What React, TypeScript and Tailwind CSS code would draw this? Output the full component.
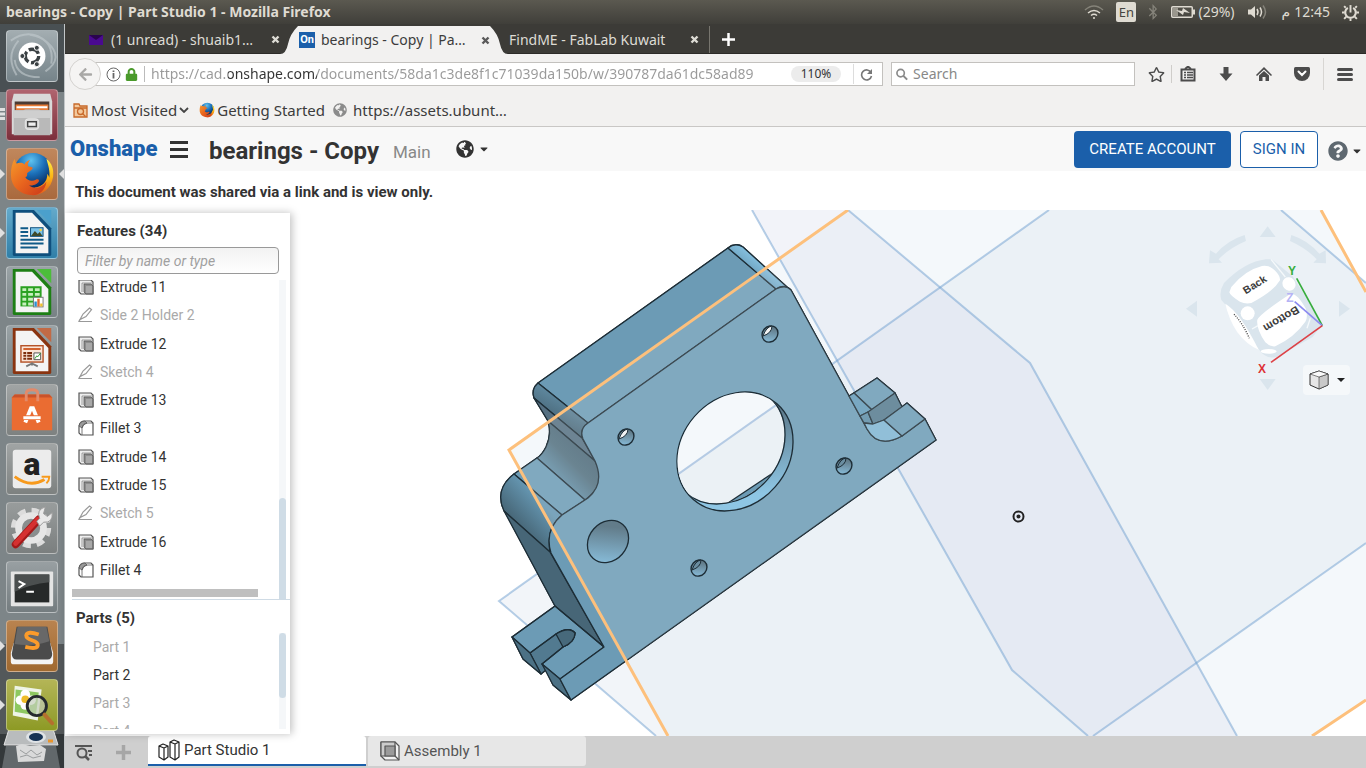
import { ReactNode, useState } from "react";
import {
	FaArrowLeft,
	FaBluetoothB,
	FaCaretDown,
	FaGlobeAmericas,
	FaLock,
	FaQuestionCircle,
	FaRegStar,
} from "react-icons/fa";

type Feature = { name: string; kind: "extrude" | "sketch" | "fillet" };

const features: Feature[] = [
	{ name: "Extrude 11", kind: "extrude" },
	{ name: "Side 2 Holder 2", kind: "sketch" },
	{ name: "Extrude 12", kind: "extrude" },
	{ name: "Sketch 4", kind: "sketch" },
	{ name: "Extrude 13", kind: "extrude" },
	{ name: "Fillet 3", kind: "fillet" },
	{ name: "Extrude 14", kind: "extrude" },
	{ name: "Extrude 15", kind: "extrude" },
	{ name: "Sketch 5", kind: "sketch" },
	{ name: "Extrude 16", kind: "extrude" },
	{ name: "Fillet 4", kind: "fillet" },
];

const parts = [
	{ name: "Part 1", hidden: true },
	{ name: "Part 2", hidden: false },
	{ name: "Part 3", hidden: true },
	{ name: "Part 4", hidden: true },
];

const FirefoxLogo = ({ className }: { className: string }) => (
	<svg className={className} viewBox="0 0 48 48">
		<defs>
			<radialGradient id="ffGlobe" cx=".45" cy=".2" r=".7">
				<stop offset="0" stopColor="#5fc3f0" />
				<stop offset=".5" stopColor="#1b6fb8" />
				<stop offset="1" stopColor="#082a5e" />
			</radialGradient>
			<linearGradient id="ffTail" x1="0" y1="0" x2="0" y2="1">
				<stop offset="0" stopColor="#fff04a" />
				<stop offset=".5" stopColor="#fdb515" />
				<stop offset="1" stopColor="#e4561c" />
			</linearGradient>
			<linearGradient id="ffFox" x1="0" y1="0" x2="1" y2="1">
				<stop offset="0" stopColor="#f59a2b" />
				<stop offset=".5" stopColor="#e8641e" />
				<stop offset="1" stopColor="#c9381a" />
			</linearGradient>
		</defs>
		<circle cx="25" cy="22" r="20" fill="url(#ffGlobe)" />
		<path
			d="M39 8c6 5 8 11 7 19-2 12-11 19-22 19l3-8c8-1 13-6 13-14 1 1 2 3 2 4 1-7-1-13-3-20z"
			fill="url(#ffTail)"
		/>
		<path
			d="M6 8c0 2 1 4 2 5 3-1 6-1 8 1 1-2 3-4 6-5-2 3-3 5-2 7l4 1c1 0 1 2-1 3l-4 3c0 3 0 4-2 4 2 4 7 5 11 3 2-1 4 0 3 2-3 4-8 4-10 4 6 4 13 3 18-4-1 9-8 15-16 14C11 45 2 37 2 25c0-7 1-12 4-17z"
			fill="url(#ffFox)"
		/>
	</svg>
);

const OfficeDoc = ({
	edge,
	fold,
	children,
}: {
	edge: string;
	fold: string;
	children: ReactNode;
}) => (
	<svg viewBox="0 0 52 52" className="size-full">
		<path d="M6 2h22l18 19v27q0 2-2 2H8q-2 0-2-2z" fill={edge} />
		<path d="M31 2h15v15z" fill={fold} />
		<path d="M9 5h17l17 18v24H9z" fill="#f4f4f4" />
		{children}
	</svg>
);

const launcher: { name: string; tile: string; mark?: string; icon: ReactNode }[] = [
	{
		name: "Dash",
		tile: "from-[#a3adb1] to-[#76848a]",
		icon: (
			<svg viewBox="0 0 52 52" className="size-full">
				<path d="M4 10Q24-4 42 12T40 42M10 46Q-2 26 12 10M24 4q26 4 22 30M8 30q2 18 26 18" stroke="#c3cbce" strokeWidth="2" fill="none" opacity=".6" />
				<circle cx="26" cy="26" r="14" fill="#fff" />
				<circle cx="26" cy="26" r="7" stroke="#3b4144" strokeWidth="3.5" fill="none" strokeDasharray="12 2.66" />
				<g fill="#3b4144" stroke="#fff" strokeWidth="1">
					<circle cx="16" cy="26" r="2.6" />
					<circle cx="31" cy="17.5" r="2.6" />
					<circle cx="31" cy="34.5" r="2.6" />
				</g>
			</svg>
		),
	},
	{
		name: "Files",
		tile: "from-[#b0646f] to-[#7c2f3c]",
		mark: "bars",
		icon: (
			<svg viewBox="0 0 52 52" className="size-full">
				<path d="M7 4h38l2 8v34H5V12z" fill="#d9d9d9" />
				<path d="M8 12h36v10H8z" fill="#4b3b33" />
				<path d="M9 15h34v6H9z" fill="#e87b35" />
				<path d="M10 17h32v2H10z" fill="#fff" />
				<path d="M7 21h10l2-1h14l2 1h10v26H7z" fill="#b9b9b9" />
				<path d="M7 21h38v8H7z" fill="#cfcfcf" />
				<rect x="19" y="30" width="14" height="11" rx="3" fill="#d8d8d8" stroke="#e8e8e8" />
				<rect x="21.5" y="33" width="9" height="5" fill="#eee" stroke="#444" strokeWidth="1.5" />
			</svg>
		),
	},
	{
		name: "Firefox",
		tile: "from-[#c0875c] to-[#a9693d]",
		mark: "both",
		icon: <FirefoxLogo className="size-full p-[2px]" />,
	},
	{
		name: "Writer",
		tile: "from-[#64aacb] to-[#2f7fa8]",
		mark: "left",
		icon: (
			<OfficeDoc edge="#0f4f7d" fold="#4ba0cc">
				<path d="M14 21h8M14 25h8M14 29h8M14 33h24M14 37h24M14 41h18" stroke="#0f5a88" strokeWidth="2" />
				<rect x="24.5" y="20.5" width="13" height="9" fill="#7cc3e8" stroke="#0f4f7d" />
				<path d="M25 29l4-5 3 3 2-2 3 4z" fill="#3f4a2a" />
				<circle cx="35" cy="23" r="1.3" fill="#f7d13d" />
			</OfficeDoc>
		),
	},
	{
		name: "Calc",
		tile: "from-[#9aa3a6] to-[#778184]",
		icon: (
			<OfficeDoc edge="#1d7f14" fold="#4cbd3a">
				<rect x="14" y="20" width="22" height="21" fill="#2aa121" />
				<path d="M16 22h4v3h-4zM22 22h5v3h-5zM29 22h5v3h-5zM16 27h4v3h-4zM22 27h5v3h-5zM29 27h5v3h-5zM16 32h4v3h-4zM22 32h5v3h-5zM16 37h4v3h-4zM22 37h5v3h-5z" fill="#c7efbd" />
				<rect x="27.5" y="31.5" width="10" height="10" fill="#fff" stroke="#777" />
				<path d="M28.5 36H31v5h-2.5z" fill="#2d8fd0" />
				<path d="M31.5 33H34v8h-2.5z" fill="#e4682c" />
				<path d="M34.5 38H37v3h-2.5z" fill="#f1c02c" />
			</OfficeDoc>
		),
	},
	{
		name: "Impress",
		tile: "from-[#9aa3a6] to-[#778184]",
		icon: (
			<OfficeDoc edge="#8a3410" fold="#c26a45">
				<rect x="14.5" y="20.5" width="23" height="17" fill="#fbe6d8" stroke="#b5542a" strokeWidth="1.5" />
				<path d="M17 24h18" stroke="#d1622f" strokeWidth="2" />
				<path d="M17 28h3M17 31h3M17 34h3M21 28h5M21 31h5M21 34h5" stroke="#7c2d0c" strokeWidth="2" />
				<path d="M28 28h7v7h-7z" fill="#fff" stroke="#555" />
				<path d="M29 34l2-3 1 1 3-4" stroke="#2e9b2e" fill="none" />
				<path d="M26 38v3M20 42l6-3 6 3" stroke="#777" strokeWidth="2" fill="none" />
			</OfficeDoc>
		),
	},
	{
		name: "Software",
		tile: "from-[#a0a4a4] to-[#7d8180]",
		icon: (
			<svg viewBox="0 0 52 52" className="size-full">
				<path d="M5 13l3-3h36l3 3v34H5z" fill="#ea6c32" />
				<path d="M5 13l3-3h36l3 3z" fill="#c9522a" />
				<path d="M20 17V9q0-4 6-4t6 4v8" stroke="#e28a6a" strokeWidth="3" fill="none" />
				<path d="M19 39l6-15h2l6 15" stroke="#fff" strokeWidth="4" fill="none" />
				<path d="M17 34h18" stroke="#ea6c32" strokeWidth="5" />
				<path d="M17 34h18" stroke="#fff" strokeWidth="3" />
			</svg>
		),
	},
	{
		name: "Amazon",
		tile: "from-[#a0a4a4] to-[#7d8180]",
		icon: (
			<svg viewBox="0 0 52 52" className="size-full">
				<rect x="6" y="6" width="40" height="40" rx="3" fill="#ececec" />
				<text x="26" y="32" textAnchor="middle" fontFamily="Roboto, sans-serif" fontWeight="900" fontSize="33" fill="#222">a</text>
				<path d="M8 34q16 12 31 3" stroke="#f79a1d" strokeWidth="3" fill="none" />
				<path d="M36 34h8q0 4-3 7" stroke="#f79a1d" strokeWidth="2" fill="none" />
			</svg>
		),
	},
	{
		name: "Settings",
		tile: "from-[#989c9c] to-[#7b7f7f]",
		icon: (
			<svg viewBox="0 0 52 52" className="size-full">
				<circle cx="25" cy="26" r="18" stroke="#dcdcdc" strokeWidth="6" fill="none" strokeDasharray="8 6.14" />
				<circle cx="25" cy="26" r="13" stroke="#e6e6e6" strokeWidth="7" fill="#8a8e8e" />
				<path d="M9 43l24-26" stroke="#a31a1a" strokeWidth="8" strokeLinecap="round" />
				<path d="M9 42l23-25" stroke="#d53131" strokeWidth="5" strokeLinecap="round" />
				<path d="M31 19l3-3q-4-9 6-12l-2 7 4 3 5-4q1 11-9 10l-4 4z" fill="#e9e9e9" stroke="#999" />
			</svg>
		),
	},
	{
		name: "Terminal",
		tile: "from-[#989fa2] to-[#747c7f]",
		icon: (
			<svg viewBox="0 0 52 52" className="size-full">
				<rect x="4" y="10" width="44" height="36" rx="1" fill="#e4e4e4" />
				<rect x="8" y="13" width="36" height="29" fill="#262929" />
				<path d="M8 13h36v8q-20 2-36 10z" fill="#4b4f4f" />
				<path d="M12 20l6 3-6 4M20 31h8" stroke="#fff" strokeWidth="2" fill="none" />
			</svg>
		),
	},
	{
		name: "Sublime Text",
		tile: "from-[#b9834f] to-[#a0692f]",
		mark: "left",
		icon: (
			<svg viewBox="0 0 52 52" className="size-full">
				<path d="M4 33l3-10h38l3 10v9q0 3-3 3H7q-3 0-3-3z" fill="#f4f4f4" />
				<path d="M10 6h32l5 28q0 6-5 6H10q-5 0-5-6z" fill="#4b4b4b" />
				<path d="M11 6h30l3 15q-18 6-36 3z" fill="#686868" />
				<path d="M33 14q-12-4-13 1 0 3 6 5t6 5q0 5-13 2" stroke="#fb9b2b" strokeWidth="4" fill="none" />
			</svg>
		),
	},
	{
		name: "Image Viewer",
		tile: "from-[#b4b556] to-[#8d9a24]",
		mark: "left",
		icon: (
			<svg viewBox="0 0 52 52" className="size-full">
				<path d="M8 6l28 4-4 32-26-5z" fill="#eef4e6" />
				<path d="M9 10l24 3-3 24-22-4z" fill="#8dc860" />
				<g fill="#fff">
					<circle cx="19" cy="15" r="5" />
					<circle cx="14" cy="21" r="5" />
					<circle cx="25" cy="21" r="5" />
					<circle cx="19" cy="26" r="5" />
				</g>
				<circle cx="19" cy="20" r="4" fill="#eebc28" />
				<circle cx="31" cy="27" r="10" fill="#c3cdbb" fillOpacity=".7" stroke="#262a2e" strokeWidth="3" />
				<path d="M39 36l8 9" stroke="#b4702e" strokeWidth="4" strokeLinecap="round" />
			</svg>
		),
	},
];

const Launcher = () => (
	<nav
		aria-label="Launcher"
		className="w-[65px] shrink-0 overflow-hidden border-r border-[#c2c6c8] bg-[linear-gradient(to_bottom,#495053_0_68px,#7d8588_68px_620px,#53585a_620px_710px,#33383a_710px)]"
	>
		<ul className="flex flex-col gap-[7px] px-[6px] pt-[6px]">
			{launcher.map((app) => (
				<li key={app.name} className="relative h-[52px]">
					<button
						aria-label={app.name}
						className={`block h-full w-[52px] overflow-hidden rounded-[4px] border border-white/35 bg-gradient-to-b ${app.tile}`}
					>
						{app.icon}
					</button>
					{(app.mark === "left" || app.mark === "both") && (
						<svg className="absolute -left-[6px] top-[21px] h-[10px] w-[5px]" viewBox="0 0 5 10">
							<path d="M0 0l5 5-5 5z" fill="#e0e0e0" />
						</svg>
					)}
					{app.mark === "bars" && (
						<svg className="absolute -left-[6px] top-[19px] h-3 w-[5px]" viewBox="0 0 5 12">
							<path d="M0 1.5h5M0 6h5M0 10.5h5" stroke="#e0e0e0" strokeWidth="3" />
						</svg>
					)}
					{app.mark === "both" && (
						<svg className="absolute -right-[6px] top-[21px] h-[10px] w-[5px]" viewBox="0 0 5 10">
							<path d="M5 0L0 5l5 5z" fill="#e0e0e0" />
						</svg>
					)}
				</li>
			))}
		</ul>
		<svg viewBox="0 0 60 40" className="-mt-[3px] block h-10 w-[60px]">
			<path d="M9 1h44l5 16H4z" fill="#b9bcbd" stroke="#e3e3e3" />
			<ellipse cx="36" cy="9" rx="10" ry="6" fill="#dfe3e6" />
			<ellipse cx="36" cy="9" rx="7" ry="4" fill="#173354" />
			<path d="M48 13h5" stroke="#e9952c" strokeWidth="3" />
			<path d="M6 18h50l4 22H2z" fill="#62686b" />
			<path d="M16 18l6-2 8 2 10-1 6 4-2 12-26 1z" fill="#d9dada" />
			<path d="M20 22l6 4 5-4 6 5 5-3M20 29l7-2 6 3 8-2" stroke="#9a9d9e" fill="none" />
		</svg>
	</nav>
);

const SystemBar = () => (
	<header className="flex h-6 shrink-0 items-center justify-between bg-gradient-to-b from-[#5b5950] to-[#403f3a] pl-[6px] pr-[7px] text-[#dfdbd2]">
		<h1 className="text-sm font-bold">
			bearings - Copy | Part Studio 1 - Mozilla Firefox
		</h1>
		<div className="flex items-center text-[15px]">
			<svg className="h-[14px] w-5" viewBox="0 0 20 14" fill="none" strokeWidth="1.5">
				<path d="M1 5q9-8 18 0" stroke="#858379" />
				<path d="M4 8q6-5 12 0M7 10.5q3-2.5 6 0" stroke="#dfdbd2" />
				<circle cx="10" cy="13" r="1" fill="#dfdbd2" />
			</svg>
			<button className="ml-3 h-5 w-5 rounded-[2px] bg-[#dfdbd2] text-[13px] leading-5 text-[#45443f]">En</button>
			<FaBluetoothB className="ml-[9px] size-4 text-[#85837a]" />
			<svg className="ml-[10px] h-3 w-6" viewBox="0 0 24 12">
				<rect x=".75" y=".75" width="20.5" height="10.5" rx="1" fill="none" stroke="#dfdbd2" strokeWidth="1.5" />
				<path d="M22 3.5h2v5h-2z" fill="#dfdbd2" />
				<path d="M2 2h5v8H2z" fill="#9a978d" />
				<path d="M5 4l6 1 1-3 7 5-6-1-1 3z" fill="#dfdbd2" />
			</svg>
			<span className="ml-[3px] text-sm">(29%)</span>
			<svg className="ml-[13px] h-4 w-5" viewBox="0 0 20 16" fill="none" strokeWidth="1.5">
				<path d="M0 5.5h3L7 2v12l-4-3.5H0z" fill="#dfdbd2" />
				<path d="M9 5q2 3 0 6M12 3.5q3 4.5 0 9" stroke="#dfdbd2" />
				<path d="M15 1.5q5 6.5 0 13" stroke="#85837a" />
			</svg>
			<span dir="rtl" className="ml-[14px] font-['DejaVu_Sans',sans-serif] text-sm">م</span>
			<time className="ml-1 text-sm">12:45</time>
			<svg className="ml-3 size-[17px]" viewBox="0 0 16 16" fill="none" stroke="#dfdbd2">
				<path d="M5.5 3.6a5 5 0 1 0 5 0" strokeWidth="2" />
				<path d="M8 1v7" strokeWidth="1.8" />
				<path d="M3.5 3.5L2 2M12.500 3.5L14 2M2.500 8H0M13.500 8H16M4 12l-2 2M12 12l2 2M8 13.500V16" strokeWidth="1.8" />
			</svg>
		</div>
	</header>
);

const CloseMark = ({ className }: { className: string }) => (
	<button aria-label="Close tab" className={`size-[9px] ${className}`}>
		<svg viewBox="0 0 9 9" className="size-full">
			<path d="M1.5 1.5l6 6M7.5 1.5l-6 6" stroke="currentColor" strokeWidth="2.4" />
		</svg>
	</button>
);

const TabStrip = () => (
	<div className="flex h-[30px] items-end border-b border-[#2c2b28] bg-[#3c3b37] text-sm text-[#dedcd5]">
		<div className="flex h-[27px] w-[215px] items-center pl-6">
			<svg className="mr-2 h-[10px] w-[14px]" viewBox="0 0 14 10">
				<path d="M0 0h14v10H0z" fill="#4a0a90" />
				<path d="M0 0h14L7 5z" fill="#2a044f" />
			</svg>
			<span className="w-[160px] truncate">(1 unread) - shuaib1…</span>
			<CloseMark className="-mr-1 shrink-0" />
		</div>
		<svg className="-mb-px h-7 w-[18px]" viewBox="0 0 18 28">
			<path d="M0 28Q6 28 8 18T18 0v28z" fill="#f2f1f0" />
		</svg>
		<div className="-mb-px flex h-7 w-48 items-center bg-[#f2f1f0] text-[#3c3c3c]">
			<span className="ml-px mr-[6px] h-4 w-4 shrink-0 overflow-hidden bg-[#1b5faa] text-center font-[Roboto,sans-serif] text-[11px] font-bold leading-4 text-white">
				On
			</span>
			<span className="w-[160px] truncate whitespace-pre">bearings - Copy | Pa…</span>
			<CloseMark className="shrink-0 text-[#5a5a5a]" />
		</div>
		<svg className="-mb-px h-7 w-[18px]" viewBox="0 0 18 28">
			<path d="M18 28Q12 28 10 18T0 0v28z" fill="#f2f1f0" />
		</svg>
		<div className="flex h-[27px] w-[202px] items-center border-r border-[#77756e] pl-px">
			<span className="w-[181px] truncate">FindME - FabLab Kuwait</span>
			<CloseMark className="shrink-0" />
		</div>
		<button aria-label="New tab" className="ml-3 flex h-[27px] items-center">
			<svg viewBox="0 0 13 13" className="size-[13px]">
				<path d="M6.5 0v13M0 6.5h13" stroke="#fff" strokeWidth="2.5" />
			</svg>
		</button>
	</div>
);

const NavBar = () => (
	<div className="flex h-10 items-center bg-[#f2f1f0] pl-1 pr-[13px]">
		<button
			aria-label="Back"
			className="relative z-10 flex size-8 shrink-0 items-center justify-center rounded-full border border-[#d4d2cf] bg-[#f5f4f3]"
		>
			<FaArrowLeft className="size-[15px] text-[#a9a8a6]" />
		</button>
		<div className="-ml-[6px] flex h-6 flex-1 items-center border border-[#c3c1be] bg-white pl-[10px]">
			<svg className="size-[15px] shrink-0" viewBox="0 0 15 15">
				<circle cx="7.5" cy="7.5" r="6.5" fill="none" stroke="#666" />
				<path d="M7.5 6v5.5M7.5 3.5V5" stroke="#666" strokeWidth="1.8" />
			</svg>
			<FaLock className="ml-1 size-[13px] shrink-0 text-[#4a9a2b]" />
			<div className="ml-[6px] h-4 w-px shrink-0 bg-[#bbb]" />
			<input
				aria-label="Address"
				readOnly
				value="https://cad.onshape.com/documents/58da1c3de8f1c71039da150b/w/390787da61dc58ad89"
				className="ml-[6px] min-w-0 flex-1 bg-[linear-gradient(90deg,#999_0_77px,#333_77px_166px,#999_166px)] bg-clip-text text-sm text-transparent outline-none"
			/>
			<button className="ml-[22px] h-4 w-[50px] shrink-0 rounded-full bg-[#ececec] text-xs leading-4 text-[#333]">110%</button>
			<div className="ml-3 h-5 w-px bg-[#ddd]" />
			<button aria-label="Reload" className="ml-[6px] mr-[9px]">
				<svg className="size-[13px]" viewBox="0 0 13 13" fill="none">
					<path d="M11 4.5A5 5 0 1 0 11.5 8" stroke="#777" strokeWidth="1.6" />
					<path d="M12 1v5H7z" fill="#777" />
				</svg>
			</button>
		</div>
		<div className="ml-2 flex h-6 w-[244px] items-center gap-[5px] border border-[#c3c1be] bg-white pl-1">
			<svg className="size-[13px]" viewBox="0 0 13 13" fill="none" stroke="#8a8a8a" strokeWidth="1.8">
				<circle cx="5" cy="5" r="4" />
				<path d="M8 8l4 4" strokeWidth="2.2" />
			</svg>
			<input
				aria-label="Search"
				placeholder="Search"
				className="w-full text-sm outline-none placeholder:text-[#888]"
			/>
		</div>
		<div className="flex items-center text-[#4c4c4c]">
			<button aria-label="Bookmark" className="ml-[13px]">
				<FaRegStar className="size-[17px]" />
			</button>
			<div className="ml-[6px] h-[18px] w-px bg-[#cfcdca]" />
			<button aria-label="Bookmarks list" className="ml-2">
				<svg className="size-4" viewBox="0 0 16 16" fill="none" stroke="currentColor">
					<path d="M1.5 3.5h13v11h-13z" strokeWidth="2" />
					<path d="M5 3l3-2.500L11 3" strokeWidth="2" />
					<path d="M4 6.5h2M4 9h2M4 11.5h2M7 6.5h6M7 9h6M7 11.5h6" strokeWidth="1.3" />
				</svg>
			</button>
			<button aria-label="Downloads" className="ml-[22px]">
				<svg className="size-4" viewBox="0 0 16 16" fill="currentColor">
					<path d="M5.5 1h5v6.500h4L8 15 1.500 7.500h4z" />
				</svg>
			</button>
			<button aria-label="Home" className="ml-[22px]">
				<svg className="size-4" viewBox="0 0 16 16" fill="currentColor">
					<path d="M8 1L0 9l1 1 7-6.500L15 10l1-1z" />
					<path d="M8 5L3 9.500V15h3.500v-4h3v4H13V9.500z" />
				</svg>
			</button>
			<button aria-label="Pocket" className="ml-[22px]">
				<svg className="size-4" viewBox="0 0 16 16">
					<path d="M1.500 1h13Q16 1 16 2.500V7a8 8 0 0 1-16 0V2.500Q0 1 1.500 1z" fill="currentColor" />
					<path d="M4.500 5.500L8 9l3.500-3.500" stroke="#fff" strokeWidth="2" strokeLinecap="round" fill="none" />
				</svg>
			</button>
			<div className="ml-[13px] h-8 w-px bg-[#d8d6d3]" />
			<button aria-label="Menu" className="ml-[13px] flex w-4 flex-col gap-[2px]">
				<i className="h-[3px] rounded-full bg-[#4c4c4c]" />
				<i className="h-[3px] rounded-full bg-[#4c4c4c]" />
				<i className="h-[3px] rounded-full bg-[#4c4c4c]" />
			</button>
		</div>
	</div>
);

const BookmarksBar = () => (
	<div className="flex h-[33px] items-center border-b border-[#c9c7c5] bg-[#f2f1f0] pl-2 text-[15px] text-[#3c3c3c]">
		<a href="#most-visited" className="flex items-center">
			<svg className="mr-[3px] size-[15px]" viewBox="0 0 15 15" fill="none" stroke="#c8692a" strokeWidth="1.3">
				<path d="M1 14V1h5l1 2h7v11z" fill="#f3c99d" />
				<circle cx="7.5" cy="8.5" r="3" />
				<path d="M9.5 10.5l3 3M1 5h13" />
			</svg>
			Most Visited
			<svg className="ml-[2px] h-[6px] w-[10px]" viewBox="0 0 10 6">
				<path d="M1 1l4 4 4-4" stroke="#444" strokeWidth="1.8" fill="none" />
			</svg>
		</a>
		<a href="#getting-started" className="ml-[10px] flex items-center">
			<FirefoxLogo className="mr-[2px] size-4" />
			Getting Started
		</a>
		<a href="#assets" className="ml-2 flex items-center">
			<FaGlobeAmericas className="mr-[6px] size-[14px] text-[#8b8b8b]" />
			https://assets.ubunt…
		</a>
	</div>
);

const DocumentHeader = () => (
	<div className="flex h-[44px] items-center bg-[#f8f8f8] pl-[5px] pr-[3px]">
		<a href="#home" className="w-[87px] font-[Roboto,sans-serif] text-[22px] font-black leading-8 text-[#1b5faa]">
			Onshape
		</a>
		<button aria-label="Document menu" className="ml-[13px] flex w-[18px] flex-col gap-1">
			<i className="h-[3px] bg-[#333]" />
			<i className="h-[3px] bg-[#333]" />
			<i className="h-[3px] bg-[#333]" />
		</button>
		<h2 className="ml-[21px] pt-[3px] text-2xl font-bold text-[#333]">bearings - Copy</h2>
		<span className="ml-[14px] pt-2 text-[17px] text-[#888]">Main</span>
		<button aria-label="Public document" className="ml-[25px] flex items-center gap-1 text-[#333]">
			<FaGlobeAmericas className="size-[18px]" />
			<FaCaretDown className="size-3" />
		</button>
		<div className="ml-auto flex items-center">
			<button className="h-[37px] w-[157px] rounded bg-[#1b5faa] text-[15px] text-white">CREATE ACCOUNT</button>
			<button className="ml-[9px] h-[37px] w-[78px] rounded border border-[#1b5faa] bg-white text-[15px] text-[#1b5faa]">
				SIGN IN
			</button>
			<button aria-label="Help" className="ml-[10px] flex items-center gap-[3px] pt-1 text-[#333]">
				<FaQuestionCircle className="size-5 text-[#5e6870]" />
				<FaCaretDown className="size-3" />
			</button>
		</div>
	</div>
);

const FeatureIcon = ({ kind }: { kind: Feature["kind"] }) => {
	if (kind === "sketch") {
		return (
			<svg className="size-4" viewBox="0 0 16 16" fill="none" stroke="#999">
				<path d="M2 12.5L5 7l6.5-6 2 1.500L8 9.500z" strokeWidth="1.2" />
				<path d="M2 12.5L1 14.500h13" strokeWidth="1.2" />
			</svg>
		);
	}
	if (kind === "fillet") {
		return (
			<svg className="size-4" viewBox="0 0 16 16" fill="#fff" stroke="#555">
				<path d="M1 13V6Q2 1 7 1h6l2 2v12H3z" strokeWidth="1.2" />
				<path d="M1 6q1-5 6-5l2 2Q5 4 4 8z" fill="#999" strokeWidth=".8" />
				<path d="M4 15V8q1-5 6-5h5" fill="none" strokeWidth=".8" />
			</svg>
		);
	}
	return (
		<svg className="size-4" viewBox="0 0 16 16" fill="#eee" stroke="#555">
			<path d="M1 1h12l2 2v12H3l-2-2z" strokeWidth="1.2" />
			<path d="M4 13V4h11" fill="none" strokeWidth=".8" stroke="#888" />
			<path d="M6 5h7l2 2v8H8l-2-2z" fill="#8c8c8c" strokeWidth=".8" />
			<path d="M8 7h6v7H8z" fill="#a8a8a8" stroke="none" />
		</svg>
	);
};

const FeaturePanel = () => {
	const [filter, setFilter] = useState("");
	const shown = features.filter((f) =>
		f.name.toLowerCase().includes(filter.toLowerCase())
	);

	return (
		<aside className="relative z-10 mb-[2px] mt-[3px] flex w-[225px] shrink-0 flex-col bg-white text-sm text-[#333] shadow-[2px_0_8px_rgba(0,0,0,0.25)]">
			<section className="ml-[7px] flex min-h-0 flex-1 flex-col border-b border-[#cfdbe5]">
				<div className="pl-[5px] pr-[11px]">
					<label htmlFor="filter" className="block h-[34px] pt-2 text-[15px] font-bold leading-5">
						Features (34)
					</label>
					<input
						id="filter"
						value={filter}
						onChange={(e) => setFilter(e.target.value)}
						placeholder="Filter by name or type"
						className="block h-[27px] w-full rounded border border-[#999] bg-gradient-to-b from-[#f2f2f2] to-white px-[7px] text-sm italic outline-none placeholder:text-[#a0a0a0]"
					/>
				</div>
				<div className="mt-[6px] flex min-h-0 flex-1">
					<div className="flex min-w-0 flex-1 flex-col overflow-hidden">
						<ul className="-mt-[7px] flex min-h-0 flex-1 flex-col justify-between">
							{shown.map((f) => (
								<li
									key={f.name}
									className={`flex h-7 items-center gap-[6px] pl-[6px] ${f.kind === "sketch" ? "text-[#aaa]" : "text-[#333]"}`}
								>
									<FeatureIcon kind={f.kind} />
									{f.name}
								</li>
							))}
						</ul>
						<div className="mb-[2px] mr-[21px] mt-[5px] h-2 shrink-0 bg-[#bfbfbf]" />
					</div>
					<div className="mr-1 flex w-[7px] flex-col justify-end bg-[#f5f7f9]">
						<div className="h-[101px] rounded-t-sm bg-[#cfdce6]" />
					</div>
				</div>
			</section>
			<section className="ml-[7px] flex h-[134px] flex-col pb-[5px]">
				<h3 className="h-[33px] pl-1 pt-2 text-[15px] font-bold leading-5">Parts (5)</h3>
				<div className="flex min-h-0 flex-1 overflow-hidden">
					<ul className="flex-1">
						{parts.map((p) => (
							<li
								key={p.name}
								className={`h-7 pl-[21px] leading-7 ${p.hidden ? "text-[#aaa]" : "text-[#333]"}`}
							>
								{p.name}
							</li>
						))}
					</ul>
					<div className="mr-1 w-[7px] bg-[#f5f7f9]">
						<div className="h-[65px] rounded-sm bg-[#cfdce6]" />
					</div>
				</div>
			</section>
		</aside>
	);
};

const bolts = [
	{ x: 770, y: 334, through: true },
	{ x: 626, y: 437, through: true },
	{ x: 844, y: 466, through: false },
	{ x: 699, y: 568, through: false },
];

const outline =
	"M735 245Q731 245 728 248L538 383Q531 389 534 398L548 421Q552 434 546 447Q542 455 537 458L514 474Q497 487 502 506L555 606L512 637L523 659L541 674L546 670L553 685L571 700L936 440L925 419L907 403L902 407L895 393L877 378L849 396L791 290L787 287L743 247Q739 244 735 245Z";

const PartModel = () => (
	<g stroke="#1d2d36" strokeWidth="1.3" strokeLinejoin="round">
		<path d={outline} fill="#6c9bb5" />
		{/* top face and its rounded ends */}
		<path d="M728 248L538 383L588 423L776 289Z" fill="#6c9bb5" />
		<path d="M728 248Q735 242 743 247L787 287Q781 285 776 289Z" fill="url(#filletLight)" />
		<path d="M538 383Q531 389 534 398L582 438Q580 428 588 423Z" fill="url(#filletDark)" />
		<path d="M534 398L548 421L595 461L582 438Z" fill="#567082" />
		<path d="M548 421Q552 434 546 447Q542 455 537 458L585 500Q602 488 599 472Q598 466 595 461Z" fill="url(#bay)" />
		<path d="M537 458L514 474L562 515L585 500Z" fill="#6c9bb5" />
		<path d="M514 474Q494 489 504 511L550 552Q546 528 562 515Z" fill="url(#shoulder)" />
		<path d="M504 511L550 552L604 647L555 606Z" fill="#476677" />
		{/* left foot */}
		<path d="M530 653L541 674L546 670L542 664L563 647Q575 642 575 633Q570 626 556 634Z" fill="#527a90" />
		<path d="M555 606L512 637L530 653L556 634Q569 626 575 633Q575 642 563 647L542 664L560 679L604 647Z" fill="none" />
		<path d="M512 637L523 659L541 674L530 653Z" fill="#4c7185" />
		<path d="M542 664L553 685L571 700L560 679Z" fill="#4c7185" />
		<path d="M556 634Q569 626 575 633Q575 642 563 647Z" fill="#47697b" />
		{/* front face */}
		<path
			d="M588 423Q579 429 583 439L595 461Q605 484 588 498L562 515Q544 530 551 553L604 647L560 679L571 700L936 440L925 419L902 436Q878 449 867 429L791 290Q786 284 776 289Z"
			fill="#6c9bb5"
		/>
		{/* right foot */}
		<path d="M854 393L877 378L895 393L872 410Z" fill="#6c9bb5" />
		<path d="M849 396L854 393L872 410L860 416Z" fill="#639ab8" />
		<path d="M860 416L868 412L873 424L864 423Z" fill="#5d8ca6" />
		<path d="M868 412L895 393L902 407L884 420L873 424Z" fill="#567b8f" />
		<path d="M864 423L873 424L884 420L902 436Q878 449 867 429Z" fill="#7fb5d2" />
		<path d="M884 420L907 403L925 419L902 436Z" fill="#6c9bb5" />
		<g clipPath="url(#partClip)" stroke="none">
			<path d="M509 450L848 210H1366V736H668Z" fill="#fff" fillOpacity=".14" />
		</g>
		{/* bores */}
		<ellipse cx="735" cy="451.5" rx="63.5" ry="53.5" transform="rotate(-49 735 451.5)" fill="url(#boreWall)" />
		<g clipPath="url(#boreFront)">
			<g clipPath="url(#boreBack)" stroke="none">
				<path d="M660 380H810V530H660Z" fill="#f4f8fb" />
				<path d="M660 487L810 381V530H660Z" fill="#ebf1f5" />
				<path d="M660 487L810 381" stroke="#b5cbe4" strokeWidth="2" />
				<path d="M776 471L728 503L740 510L790 480Z" fill="#6c9bb5" stroke="#1d2d36" />
			</g>
			<ellipse cx="727" cy="444.5" rx="63.5" ry="53.5" transform="rotate(-49 727 444.5)" fill="none" />
		</g>
		<ellipse cx="608" cy="541.5" rx="22.5" ry="19" transform="rotate(-49 608 541.5)" fill="url(#bore)" />
		{bolts.map(({ x, y, through }) => (
			<g key={x} strokeWidth="1.4">
				<ellipse cx={x} cy={y} rx="8.5" ry="7.5" transform={`rotate(-49 ${x} ${y})`} fill="url(#bore)" />
				<path
					d={`M${x - 7} ${y + 2}Q${x - 4} ${y - 7} ${x + 2} ${y - 8}Q${x + 2} ${y - 1} ${x - 7} ${y + 2}Z`}
					fill={through ? "#f1f3f4" : "#6a8da0"}
					strokeWidth="1"
				/>
			</g>
		))}
	</g>
);

const ViewCube = () => (
	<g transform="translate(1160 205) scale(.33333)">
		<g fill="#dae5ed">
			<path d="M323 64l24 32h-48zM323 555l24-33h-48zM78 311l33-24v48zM570 311l-33-24v48z" />
			<path d="M254 90q-52 16-86 56l-18-10-3 39 39-2-10-10q32-34 82-55zM394 90q50 16 84 56l19-10 1 39-38-2 10-10q-32-34-80-55z" />
			<path d="M318 163Q255 170 192 234Q176 260 184 285L206 310Q248 386 296 432Q316 464 350 456L458 396L486 360L452 296L412 236L398 214L335 163Z" />
		</g>
		<g fill="#fff">
			<path d="M214 246Q254 196 306 183Q330 180 344 196Q362 214 360 226Q340 260 274 294Q256 298 240 290Q210 272 208 262Z" />
			<path d="M292 344Q300 326 392 266Q412 264 438 312Q444 340 436 350Q404 396 346 424Q330 426 316 412Q288 372 292 344Z" />
			<path d="M196 296Q240 322 296 434Q260 420 232 382Q206 342 196 296Z" />
			<circle cx="263" cy="325" r="21" />
			<ellipse cx="387" cy="237" rx="19" ry="21" transform="rotate(-40 387 237)" />
			<ellipse cx="326" cy="439" rx="24" ry="7" />
		</g>
		<path d="M333 163L376 216M441 370l10-30M276 372l18-10" stroke="#f5f9fb" strokeWidth="4" />
		<path d="M222 328q26 26 46 72" stroke="#444" strokeWidth="4" strokeDasharray="3 4" fill="none" />
		<g fontFamily="Liberation Sans, sans-serif" fontWeight="bold" fill="#3c3c3c" textAnchor="middle">
			<text fontSize="32" transform="translate(290 248) rotate(-32)">Back</text>
			<text fontSize="34" transform="translate(358 332) rotate(149)">Bottom</text>
			<text x="396" y="209" fontSize="36" fill="#37ad3d">Y</text>
			<text x="390" y="290" fontSize="36" fill="#b5b3f5">Z</text>
			<text x="306" y="504" fontSize="36" fill="#dd3136">X</text>
		</g>
		<path d="M410 220L487 362" stroke="#37ad3d" strokeWidth="5" />
		<path d="M404 290L487 362" stroke="#8c8af0" strokeWidth="5" />
		<path d="M333 472L487 362" stroke="#dd4146" strokeWidth="5" />
	</g>
);

const Canvas = () => (
	<main className="relative min-w-0 flex-1">
		<svg viewBox="290 210 1076 526" preserveAspectRatio="xMinYMin slice" className="absolute inset-0 size-full">
			<defs>
				<clipPath id="partClip">
					<path d={outline} />
				</clipPath>
				<clipPath id="boreFront">
					<ellipse cx="735" cy="451.5" rx="63" ry="53" transform="rotate(-49 735 451.5)" />
				</clipPath>
				<clipPath id="boreBack">
					<ellipse cx="727" cy="444.5" rx="63" ry="53" transform="rotate(-49 727 444.5)" />
				</clipPath>
				<linearGradient id="filletLight" x1="0" y1="1" x2="1" y2="0">
					<stop offset=".4" stopColor="#6fa3c0" />
					<stop offset=".6" stopColor="#85c0df" />
				</linearGradient>
				<linearGradient id="filletDark" x1=".7" y1=".2" x2=".4" y2=".8">
					<stop offset="0" stopColor="#6490a8" />
					<stop offset="1" stopColor="#456272" />
				</linearGradient>
				<linearGradient id="bay" x1=".7" y1=".3" x2=".3" y2=".8">
					<stop offset="0" stopColor="#4b6878" />
					<stop offset=".4" stopColor="#52707f" />
					<stop offset="1" stopColor="#6796b0" />
				</linearGradient>
				<linearGradient id="shoulder" x1=".6" y1=".3" x2=".3" y2=".65">
					<stop offset="0" stopColor="#6596b1" />
					<stop offset="1" stopColor="#486879" />
				</linearGradient>
				<linearGradient id="boreWall" x1="1" y1=".3" x2=".3" y2="1">
					<stop offset=".2" stopColor="#5d7a8b" />
					<stop offset=".9" stopColor="#8ec6e4" />
				</linearGradient>
				<linearGradient id="bore" x1="1" y1=".2" x2="0" y2=".8">
					<stop offset=".2" stopColor="#627c8a" />
					<stop offset="1" stopColor="#8ac0de" />
				</linearGradient>
			</defs>
			<path d="M509 450L848 210H1321L1366 292V700L1312 736H668Z" fill="#f4f8fb" />
			<path d="M499 601L1049 210H1281L1366 283V543L1093 736H656Z" fill="#dce6ee" fillOpacity=".38" />
			<path d="M752 210H848L1030 363L1237 736H1088L1012 670Z" fill="#dcdfee" fillOpacity=".38" />
			<g fill="none" stroke="#6f9fd0" strokeOpacity=".5" strokeWidth="2">
				<path d="M656 736L499 601L1049 210M1281 210L1366 283M1366 543L1093 736" />
				<path d="M752 210L1012 670L1088 736M848 210L1030 363L1237 736" />
			</g>
			<PartModel />
			<g fill="none" stroke="#fdc07c" strokeWidth="3">
				<path d="M848 210L509 450L668 736M1321 210L1366 292M1312 736L1366 700" />
			</g>
			<circle cx="1018.5" cy="516.5" r="5" fill="none" stroke="#222" strokeWidth="2" />
			<circle cx="1018.5" cy="516.5" r="2" fill="#222" />
			<ViewCube />
		</svg>
		<button
			aria-label="View options"
			className="absolute right-4 top-[155px] flex h-[30px] w-[47px] items-center justify-center gap-2 rounded-sm bg-[#f5f8fa]"
		>
			<svg className="h-5 w-5" viewBox="0 0 20 20" stroke="#333" strokeLinejoin="round">
				<path d="M10 1l9 3v11l-9 4-9-4V4z" fill="#e6e6e6" />
				<path d="M10 7l9-3v11l-9 4z" fill="#c9c9c9" strokeWidth=".6" />
				<path d="M1 4l9 3 9-3-9-3z" fill="#fafafa" strokeWidth=".6" />
			</svg>
			<svg className="h-1 w-2" viewBox="0 0 8 4">
				<path d="M0 0h8L4 4z" fill="#222" />
			</svg>
		</button>
	</main>
);

const DocumentTabs = () => (
	<footer className="flex h-8 shrink-0 bg-[#cfcfcf] text-[15px] text-[#333]">
		<button aria-label="Tab manager" className="ml-[9px] w-[21px]">
			<svg className="size-5" viewBox="0 0 20 20" fill="none" stroke="#555" strokeWidth="2">
				<path d="M1 4h17M14 9h4M15 13h3" />
				<circle cx="8" cy="11" r="4.5" />
				<path d="M11 14l4 4" strokeWidth="2.5" />
			</svg>
		</button>
		<button aria-label="Insert new tab" className="ml-[21px] w-[15px]">
			<svg viewBox="0 0 15 15" className="size-[15px]">
				<path d="M7.5 0v15M0 7.5h15" stroke="#a6a6a6" strokeWidth="3.5" />
			</svg>
		</button>
		<button className="mb-[2px] ml-[17px] flex w-[218px] items-center gap-1 rounded-t-[3px] border-b-2 border-[#1b5faa] bg-white pl-[10px]">
			<svg className="h-[22px] w-[22px]" viewBox="0 0 22 22" fill="#fff" stroke="#222" strokeWidth="1.2" strokeLinejoin="round">
				<path d="M1 7l4-2 5 2v11l-4 3-5-3zM1 7l5 2 4-2M6 9v12" />
				<path d="M12 3l4-2 5 2v15l-4 3-5-3zM12 3l5 2 4-2M17 5v16" />
			</svg>
			Part Studio 1
		</button>
		<button className="mb-[2px] ml-[2px] flex w-[218px] items-center gap-1 rounded-t-[3px] rounded-br-[3px] bg-[#e7e7e7] pl-3 text-[#555]">
			<svg className="size-5" viewBox="0 0 20 20" fill="#f2f2f2" stroke="#555" strokeWidth="1.2" strokeLinejoin="round">
				<path d="M1 1h14l4 4v14H5l-4-4z" />
				<path d="M1 1h14v14H1z" fill="#ccc" />
				<path d="M5 5h10v10H5z" fill="#9b9b9b" />
				<path d="M15 15l4 4" />
			</svg>
			Assembly 1
		</button>
	</footer>
);

const App = () => {
	return (
		<div className="flex h-screen flex-col overflow-hidden bg-white font-['Noto_Sans','Open_Sans',sans-serif]">
			<SystemBar />
			<div className="flex min-h-0 flex-1">
				<Launcher />
				<div className="flex min-w-0 flex-1 flex-col">
					<TabStrip />
					<NavBar />
					<BookmarksBar />
					<div className="flex min-h-0 flex-1 flex-col font-[Roboto,sans-serif]">
						<DocumentHeader />
						<p className="h-[39px] shrink-0 pl-[10px] pt-[11px] text-[15px] font-bold leading-5 text-[#333]">
							This document was shared via a link and is view only.
						</p>
						<div className="flex min-h-0 flex-1">
							<FeaturePanel />
							<Canvas />
						</div>
						<DocumentTabs />
					</div>
				</div>
			</div>
		</div>
	);
};

export default App;
